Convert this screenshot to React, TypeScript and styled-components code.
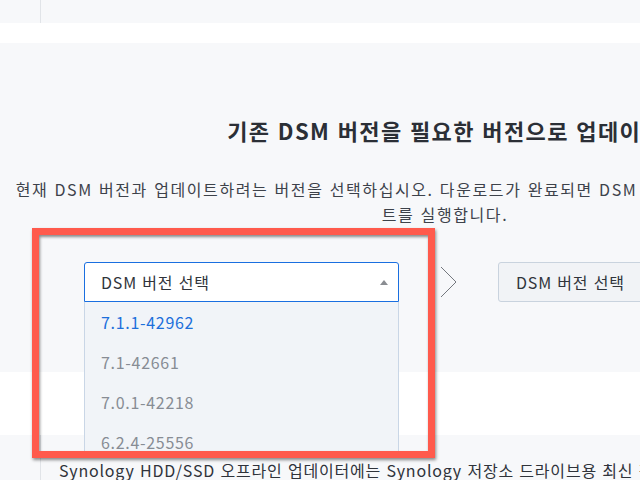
import styled, { createGlobalStyle } from 'styled-components'

const GlobalStyle = createGlobalStyle`
   html, body {
      margin: 0;
      padding: 0;
      overflow: hidden;
      background: #f7f8fa;
   }
   body {
      font-family: 'Noto Sans CJK KR', 'Noto Sans', sans-serif;
      color: #2f333a;
      letter-spacing: 0.8px;
      word-spacing: 1px;
   }
`

const VERSIONS = ['7.1.1-42962', '7.1-42661', '7.0.1-42218', '6.2.4-25556']

const Page = styled.div`
   position: relative;
   width: 890px;
`
const TabStrip = styled.div`
   height: 23px;
   display: grid;
   grid-template-columns: 41px 1fr;
   background: #f7f8fa;
`
const SideCell = styled.div`
   border-right: 1px solid #e1e4e8;
`
const Band = styled.div<{ $height: number }>`
   height: ${({ $height }) => $height}px;
   background: #ffffff;
`
const UpdateSection = styled.section`
   height: 329px;
   box-sizing: border-box;
   padding-top: 72px;
   background: #f7f8fa;
   display: flex;
   flex-direction: column;
   align-items: center;
`
const Heading = styled.h2`
   margin: 0;
   font-size: 22px;
   line-height: 30px;
   font-weight: 700;
   letter-spacing: 1.4px;
   color: #2b2f36;
   white-space: nowrap;
`
const Intro = styled.p`
   margin: 32px 0 0;
   font-size: 16px;
   line-height: 25px;
   letter-spacing: 1.6px;
   color: #3d424a;
   text-align: center;
   white-space: nowrap;
`
const PickerRow = styled.div`
   margin-top: 35px;
   display: flex;
   align-items: center;
`
const SelectWrap = styled.div`
   position: relative;
   width: 315px;
`
const SelectBox = styled.div`
   height: 40px;
   box-sizing: border-box;
   display: flex;
   align-items: center;
   justify-content: space-between;
   padding: 0 10px 0 16px;
   background: #ffffff;
   border: 1px solid #1a6fe0;
   border-radius: 3px 3px 0 0;
   font-size: 16px;
   color: #30343b;
`
const UpArrow = styled.span`
   width: 0;
   height: 0;
   border-left: 4px solid transparent;
   border-right: 4px solid transparent;
   border-bottom: 5px solid #8a8d92;
`
const OptionList = styled.ul`
   position: absolute;
   top: 40px;
   left: 0;
   right: 0;
   height: 156px;
   overflow: hidden;
   margin: 0;
   padding: 0;
   list-style: none;
   background: #f1f4f8;
   border-left: 1px solid #c9d6e6;
   border-right: 1px solid #c9d6e6;
   z-index: 5;
`
const Option = styled.li<{ $active?: boolean }>`
   height: 40px;
   display: flex;
   align-items: center;
   padding-left: 16px;
   font-size: 16px;
   letter-spacing: 0.7px;
   color: ${({ $active }) => ($active ? '#1c6fdb' : '#878c94')};
`
const ArrowCell = styled.div`
   width: 99px;
   display: flex;
   justify-content: center;
`
const TargetButton = styled.button`
   width: 308px;
   height: 40px;
   box-sizing: border-box;
   padding: 0 17px;
   text-align: left;
   background: #f1f3f6;
   border: 1px solid #c9d3de;
   border-radius: 3px;
   font-family: inherit;
   font-size: 16px;
   letter-spacing: inherit;
   word-spacing: inherit;
   color: #30343b;
`
const InfoSection = styled.section`
   display: grid;
   grid-template-columns: 41px 1fr;
   background: #f7f8fa;
   min-height: 60px;
`
const InfoText = styled.p`
   margin: 0;
   padding: 24px 0 0 18px;
   font-size: 16px;
   line-height: 22px;
   color: #2f333a;
   white-space: nowrap;
`
const Highlight = styled.div`
   position: absolute;
   left: 32px;
   top: 228px;
   width: 403px;
   height: 230px;
   box-sizing: border-box;
   border: 7px solid #ff5a4c;
   box-shadow: 1px 2px 3px rgba(0, 0, 0, 0.45), inset 1px 2px 3px rgba(0, 0, 0, 0.45);
   z-index: 10;
   pointer-events: none;
`

const Chevron = () => (
   <svg width="17" height="32" viewBox="0 0 17 32">
      <polyline points="1,1 16,16 1,31" fill="none" stroke="#74787e" strokeWidth="1" />
   </svg>
)

const App = () => (
   <Page>
      <GlobalStyle />
      <TabStrip>
         <SideCell />
         <div />
      </TabStrip>
      <Band $height={20} />
      <UpdateSection>
         <Heading>기존 DSM 버전을 필요한 버전으로 업데이트</Heading>
         <Intro>
            현재 DSM 버전과 업데이트하려는 버전을 선택하십시오. 다운로드가 완료되면 DSM 업데이트 도구 자동으로 업데이
            <br />
            트를 실행합니다.
         </Intro>
         <PickerRow>
            <SelectWrap>
               <SelectBox>
                  DSM 버전 선택
                  <UpArrow />
               </SelectBox>
               <OptionList>
                  {VERSIONS.map((v, i) => (
                     <Option key={v} $active={i === 0}>
                        {v}
                     </Option>
                  ))}
               </OptionList>
            </SelectWrap>
            <ArrowCell>
               <Chevron />
            </ArrowCell>
            <TargetButton>DSM 버전 선택</TargetButton>
         </PickerRow>
      </UpdateSection>
      <Band $height={63} />
      <InfoSection>
         <SideCell />
         <InfoText>Synology HDD/SSD 오프라인 업데이터에는 Synology 저장소 드라이브용 최신 펌웨어가 포함되어 있습니다.</InfoText>
      </InfoSection>
      <Highlight />
   </Page>
)

export default App
